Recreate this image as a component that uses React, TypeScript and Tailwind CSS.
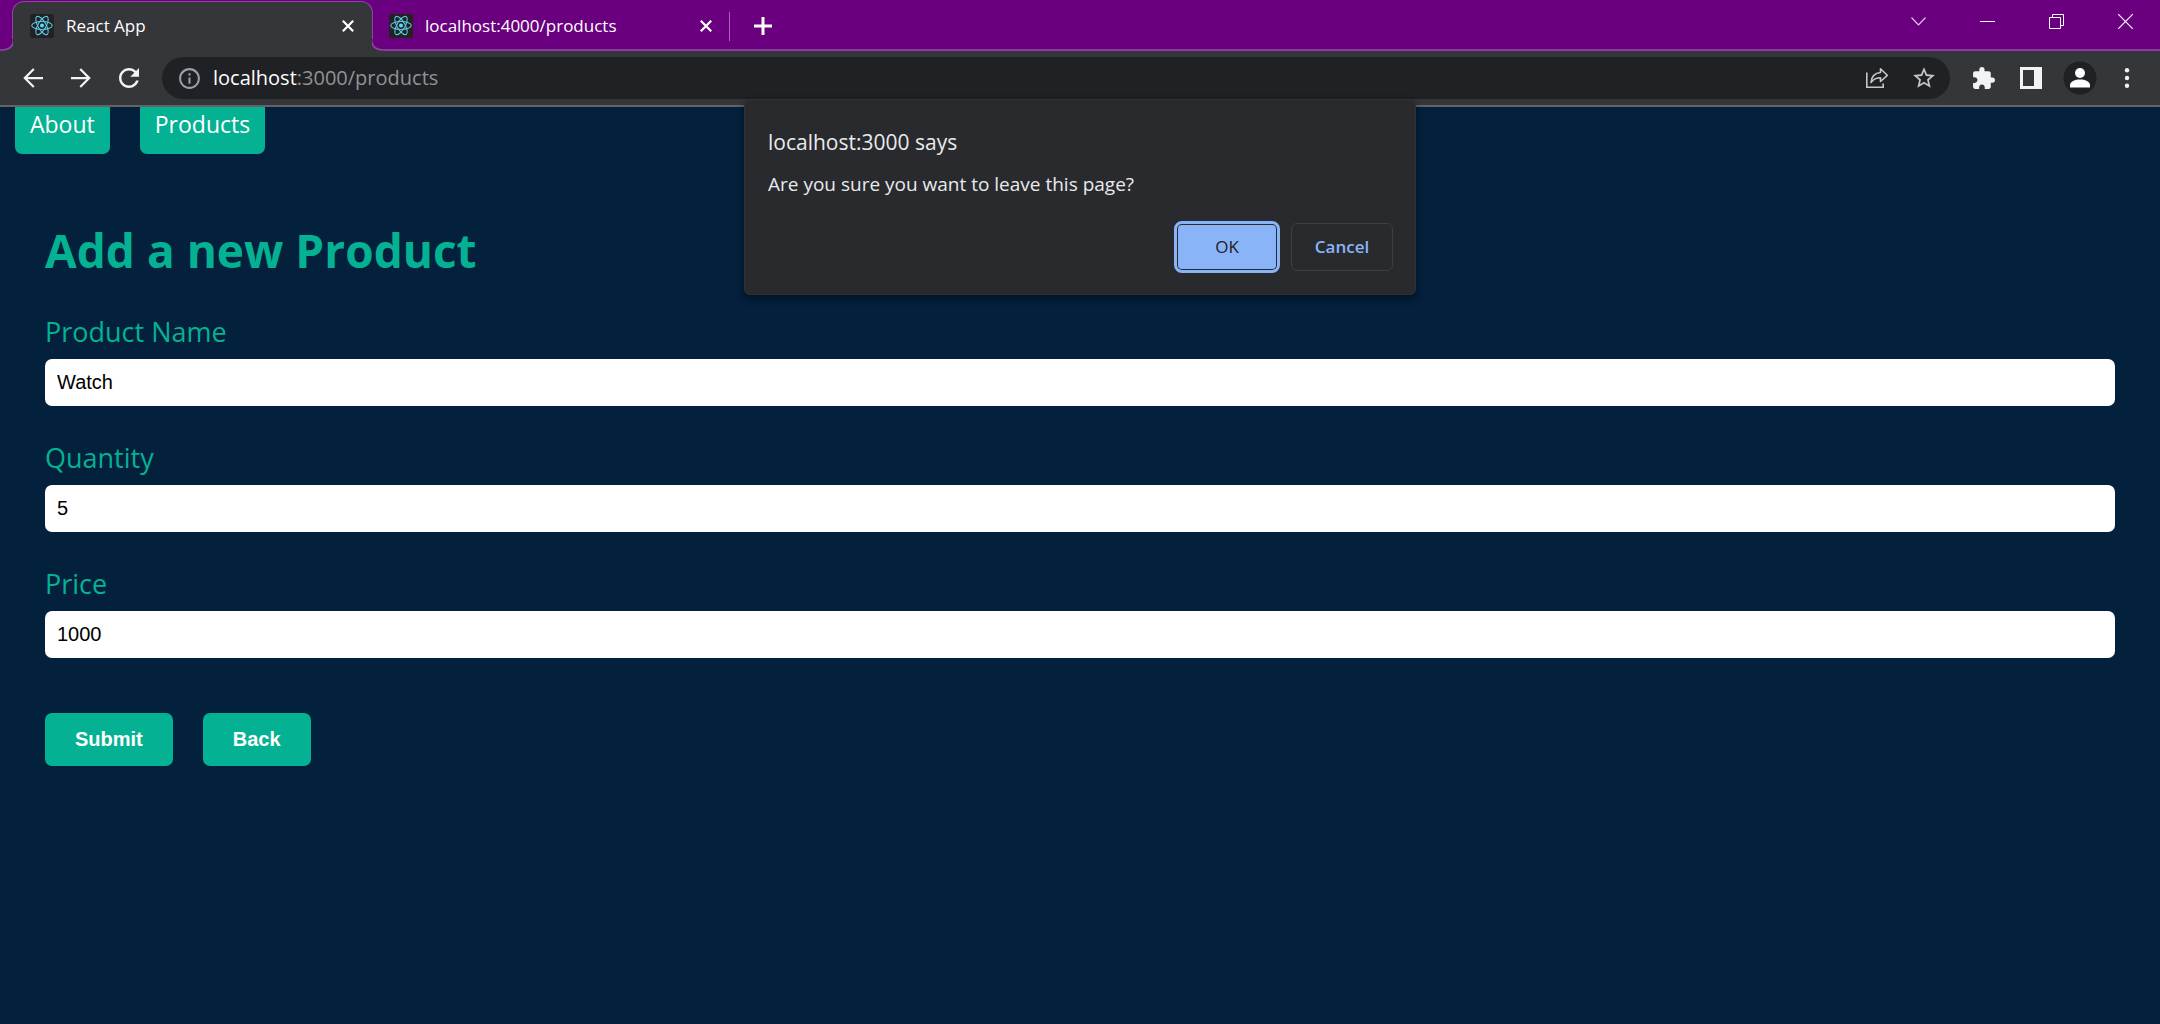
import React, { useState } from 'react';

function ReactMark() {
  return (
    <svg className="size-6 shrink-0" viewBox="0 0 24 24" fill="none" aria-hidden="true">
      <rect width="24" height="24" rx="2" fill="#222222" />
      <g stroke="#61dafb" strokeWidth="1.1" opacity="0.9">
        <ellipse cx="12" cy="11.5" rx="10.3" ry="4" />
        <ellipse cx="12" cy="11.5" rx="10.3" ry="4" transform="rotate(60 12 11.5)" />
        <ellipse cx="12" cy="11.5" rx="10.3" ry="4" transform="rotate(120 12 11.5)" />
      </g>
      <circle cx="12" cy="11.5" r="2" fill="#61dafb" />
    </svg>
  );
}

function CloseGlyph() {
  return (
    <svg className="size-3" viewBox="0 0 12 12" fill="none" stroke="white" strokeWidth="2.2" aria-hidden="true">
      <path d="M.8.8 11.2 11.2M11.2.8.8 11.2" />
    </svg>
  );
}

function Flare({ flip = false }: { flip?: boolean }) {
  return (
    <svg
      className={flip ? 'absolute bottom-0 -right-3 size-3 -scale-x-100' : 'absolute bottom-0 -left-3 size-3'}
      viewBox="0 0 12 12"
      aria-hidden="true"
    >
      <path d="M0 0H12V12H0Z" fill="#35363a" />
      <path d="M0 0H13V0C13 7 8 11.2 0 11.2Z" fill="#6a0080" />
      <path d="M12.5 0C12.5 7 8 11 0 11" fill="none" stroke="#8f46a3" strokeWidth="1.6" />
    </svg>
  );
}

function TabStrip() {
  return (
    <div className="flex h-[51px] border-b-2 border-[#8a3d9f] bg-[#6a0080] pl-3 text-[17px] text-white">
      <div className="relative mt-px -mb-0.5 flex w-[361px] shrink-0 items-center rounded-t-xl border-x border-t border-[#8f46a3] bg-[#35363a] pr-[18px] pb-px pl-[17px]">
        <Flare />
        <Flare flip />
        <ReactMark />
        <span className="ml-3 flex-1">React App</span>
        <button aria-label="Close React App"><CloseGlyph /></button>
      </div>
      <div className="flex w-[356px] shrink-0 items-center pt-0.5 pr-[17px] pl-4">
        <ReactMark />
        <span className="ml-3 flex-1">localhost:4000/products</span>
        <button aria-label="Close localhost:4000/products"><CloseGlyph /></button>
      </div>
      <div className="mt-3 h-[29px] w-px bg-[#a865b8]" />
      <button aria-label="New tab" className="ml-6 pt-0.5">
        <svg className="size-[18px]" viewBox="0 0 18 18" stroke="white" strokeWidth="3" aria-hidden="true">
          <path d="M9 0V18M0 9H18" />
        </svg>
      </button>
      <div className="ml-auto flex items-start gap-[54px] pt-3.5 pr-[27px]">
        <button aria-label="Search tabs">
          <svg className="size-[15px]" viewBox="0 0 15 15" fill="none" stroke="#e6cdea" strokeWidth="1.1" aria-hidden="true">
            <path d="M.5 3.5 7.5 11 14.5 3.5" />
          </svg>
        </button>
        <button aria-label="Minimise">
          <svg className="size-[15px]" viewBox="0 0 15 15" stroke="white" aria-hidden="true">
            <path d="M0 7.5H15" />
          </svg>
        </button>
        <button aria-label="Restore">
          <svg className="size-[15px]" viewBox="0 0 15 15" fill="none" stroke="white" aria-hidden="true">
            <path d="M.5 3.5H11.5V14.5H.5ZM3.5 3.5V.5H14.5V11.5H11.5" />
          </svg>
        </button>
        <button aria-label="Close window">
          <svg className="size-[15px]" viewBox="0 0 15 15" fill="none" stroke="white" strokeWidth="1.2" aria-hidden="true">
            <path d="M.3.3 14.7 14.7M14.7.3.3 14.7" />
          </svg>
        </button>
      </div>
    </div>
  );
}

function Glyph({ d, className }: { d: string; className: string }) {
  return (
    <svg className={className} viewBox="0 0 24 24" fill="currentColor" aria-hidden="true">
      <path d={d} />
    </svg>
  );
}

function Toolbar() {
  return (
    <div className="flex h-14 items-center border-b-2 border-[#636467] bg-[#35363a] pr-7 pl-[18px] text-[#f1f3f4]">
      <div className="flex gap-[18px]">
        <button aria-label="Back"><Glyph className="size-[30px]" d="M20 11.1H7.6l5.65-5.65L12 4.2 4.2 12l7.8 7.8 1.25-1.25L7.6 12.9H20z" /></button>
        <button aria-label="Forward"><Glyph className="size-[30px]" d="M4 12.9h12.4l-5.65 5.65L12 19.8l7.8-7.8L12 4.2l-1.25 1.25 5.65 5.65H4z" /></button>
        <button aria-label="Reload"><Glyph className="size-[30px]" d="M17.65 6.35C16.2 4.9 14.21 4 12 4c-4.42 0-7.99 3.58-7.99 8s3.57 8 7.99 8c3.73 0 6.84-2.55 7.73-6h-2.08c-.82 2.33-3.04 4-5.65 4-3.31 0-6-2.69-6-6s2.69-6 6-6c1.66 0 3.14.69 4.22 1.78L13 11h7V4z" /></button>
      </div>
      <div className="ml-[18px] flex h-[42px] flex-1 items-center rounded-full bg-[#202124] pr-[13px] pl-[15px]">
        <Glyph className="size-[25px] text-[#9aa0a6]" d="M11 7h2v2h-2zm0 4h2v6h-2zm1-9C6.48 2 2 6.48 2 12s4.48 10 10 10 10-4.480 10-10S17.520 2 12 2m0 18c-4.410 0-8-3.590-8-8s3.590-8 8-8 8 3.590 8 8-3.590 8-8 8" />
        <div className="ml-[11px] flex-1 text-xl text-[#8f9397]"><span className="text-white">localhost</span>:3000/products</div>
        <button aria-label="Share" className="text-[#c4c7c5]">
          <svg className="size-6" viewBox="0 0 24 24" fill="none" stroke="currentColor" strokeWidth="1.6" aria-hidden="true">
            <path d="M1.800 6.500V21.300H18.200V17.500" />
            <path d="M6 16.500C6.500 10.500 10 7 15.500 6.500V2.700L22.300 9.300 15.500 15.500V11.800C11 11.800 8.300 13.300 6 16.500Z" strokeLinejoin="round" />
          </svg>
        </button>
        <button aria-label="Bookmark this page" className="ml-[22px] text-[#c4c7c5]"><Glyph className="size-[26px]" d="m22 9.240-7.190-.62L12 2 9.190 8.630 2 9.240l5.460 4.730L5.820 21 12 17.270 18.180 21l-1.630-7.030zM12 15.400l-3.760 2.270 1-4.280-3.320-2.880 4.380-.38L12 6.100l1.710 4.040 4.380.38-3.320 2.880 1 4.280z" /></button>
      </div>
      <button aria-label="Extensions" className="ml-[21px]"><Glyph className="size-[25px]" d="M20.500 11H19V7c0-1.100-.9-2-2-2h-4V3.500a2.500 2.500 0 0 0-5 0V5H4c-1.100 0-1.990.9-1.990 2v3.800H3.500c1.490 0 2.700 1.210 2.700 2.700s-1.210 2.700-2.700 2.700H2V20c0 1.100.9 2 2 2h3.800v-1.500c0-1.490 1.210-2.700 2.700-2.700s2.700 1.210 2.700 2.700V22H17c1.100 0 2-.9 2-2v-4h1.500a2.500 2.500 0 0 0 0-5" /></button>
      <button aria-label="Side panel" className="ml-6">
        <svg className="size-[22px]" viewBox="0 0 22 22" aria-hidden="true">
          <path fill="currentColor" fillRule="evenodd" d="M0 0H22V22H0ZM3 3V19H14V3Z" />
        </svg>
      </button>
      <button aria-label="Profile" className="ml-[21px]">
        <svg className="size-[34px]" viewBox="0 0 34 34" aria-hidden="true">
          <circle cx="17" cy="17" r="16.500" fill="#202124" />
          <circle cx="17" cy="12" r="5" fill="white" />
          <path fill="white" d="M7 26.500V24C7 20.500 12 18.500 17 18.500S27 20.500 27 24V26.500Z" />
        </svg>
      </button>
      <button aria-label="Menu" className="ml-[25px]">
        <svg className="h-5 w-[10px]" viewBox="0 0 10 20" fill="currentColor" aria-hidden="true">
          <circle cx="5" cy="2.200" r="2.200" /><circle cx="5" cy="10" r="2.200" /><circle cx="5" cy="17.800" r="2.200" />
        </svg>
      </button>
    </div>
  );
}

function ConfirmDialog() {
  return (
    <div role="dialog" aria-labelledby="confirm-title" className="absolute top-[99px] left-1/2 w-[672px] -translate-x-1/2 rounded-md border border-[#303134] bg-[#292a2d] px-[23px] pt-[26px] pb-[23px] text-[#e8eaed] shadow-[0_3px_8px_rgba(0,0,0,0.45)]">
      <h2 id="confirm-title" className="text-[21px] leading-8">localhost:3000 says</h2>
      <p className="mt-3 text-[19px] leading-7">Are you sure you want to leave this page?</p>
      <div className="mt-[25px] -mr-px flex justify-end gap-[15px]">
        <button className="my-0.5 h-11 w-[98px] rounded-sm bg-[#8ab4f8] text-[17px] font-medium text-[#202124] outline-3 outline-offset-1 outline-[#8ab4f8]">OK</button>
        <button className="h-12 w-[102px] rounded-md border border-[#3c4043] text-[17px] font-semibold text-[#8ab4f8]">Cancel</button>
      </div>
    </div>
  );
}

function Field({ id, label, initial }: { id: string; label: string; initial: string }) {
  const [value, setValue] = useState(initial);
  return (
    <div className="flex flex-col">
      <label htmlFor={id} className="mb-2 text-[27px] leading-[38px] text-[#04b293]">{label}</label>
      <input
        id={id}
        value={value}
        onChange={(e) => setValue(e.target.value)}
        className="h-[47px] w-full rounded-[7px] bg-white px-3 font-['Liberation_Sans',Arial,sans-serif] text-xl text-black outline-none"
      />
    </div>
  );
}

export default function App() {
  return (
    <div className="relative min-h-screen bg-[#03203c] font-['Open_Sans','Noto_Sans',sans-serif]">
      <header>
        <TabStrip />
        <Toolbar />
      </header>
      <nav className="flex gap-[30px] px-[15px] text-[23px] leading-[34px] text-white">
        <a href="#about" className="rounded-b-[7px] bg-[#04b293] px-[15px] pb-[13px]">About</a>
        <a href="#products" className="rounded-b-[7px] bg-[#04b293] px-[15px] pb-[13px]">Products</a>
      </nav>
      <main className="px-[45px] pt-16">
        <h1 className="text-[46px] leading-16 font-bold text-[#04b293]">Add a new Product</h1>
        <form className="mt-[31px]" onSubmit={(e) => e.preventDefault()}>
          <div className="flex flex-col gap-[33px]">
            <Field id="name" label="Product Name" initial="Watch" />
            <Field id="quantity" label="Quantity" initial="5" />
            <Field id="price" label="Price" initial="1000" />
          </div>
          <div className="mt-[55px] flex gap-[30px] font-['Liberation_Sans',Arial,sans-serif] text-xl font-bold text-white">
            <button type="submit" className="h-[53px] rounded-[7px] bg-[#04b293] px-[30px] pb-0.5">Submit</button>
            <button type="button" className="h-[53px] rounded-[7px] bg-[#04b293] px-[30px] pb-0.5">Back</button>
          </div>
        </form>
      </main>
      <ConfirmDialog />
    </div>
  );
}
